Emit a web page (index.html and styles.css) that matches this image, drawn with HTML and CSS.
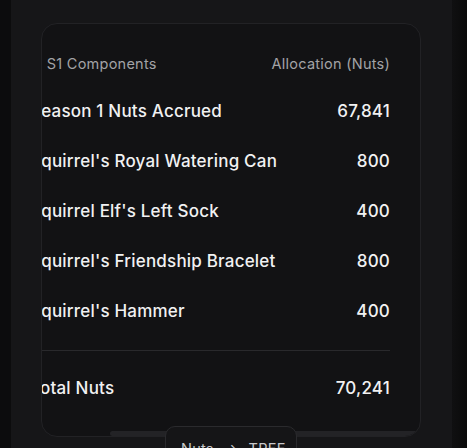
FILE: index.html
```html
<!DOCTYPE html>
<html lang="en">
<head>
<meta charset="utf-8">
<title>S1 Components</title>
<link rel="stylesheet" href="styles.css">
</head>
<body>
<div class="page">
  <div class="edge-left"></div>
  <main class="panel">
    <section class="card">
      <div class="content">
        <div class="row head">
          <span class="head-left">· S1 Components</span>
          <span>Allocation (Nuts)</span>
        </div>
        <div class="row"><span>Season 1 Nuts Accrued</span><span>67,841</span></div>
        <div class="row"><span>Squirrel's Royal Watering Can</span><span>800</span></div>
        <div class="row"><span>Squirrel Elf's Left Sock</span><span>400</span></div>
        <div class="row"><span>Squirrel's Friendship Bracelet</span><span>800</span></div>
        <div class="row"><span>Squirrel's Hammer</span><span>400</span></div>
        <div class="divider"></div>
        <div class="row total"><span>Total Nuts</span><span>70,241</span></div>
      </div>
      <div class="scroll-thumb"></div>
    </section>
    <div class="tip">Nuts <span class="arrow">→</span> TREE</div>
  </main>
  <div class="edge-right"></div>
</div>
</body>
</html>
```
FILE: styles.css
```css
html, body {
  margin: 0;
  padding: 0;
  height: 448px;
  overflow: hidden;
  background: #0b0b0c;
  font-family: "Inter", "Liberation Sans", sans-serif;
}

.page {
  display: flex;
  height: 448px;
}

.edge-left {
  width: 11px;
  flex: none;
  background: #0c0c0d;
}

.panel {
  position: relative;
  width: 441px;
  flex: none;
  background: #161618;
  padding-top: 23px;
  box-sizing: border-box;
}

.edge-right {
  flex: 1;
  background: linear-gradient(to right, #101011, #0a0a0a);
}

.card {
  position: relative;
  margin-left: 30px;
  width: 380px;
  height: 414px;
  box-sizing: border-box;
  border: 1px solid #222225;
  border-radius: 16px;
  background: #121214;
  overflow: hidden;
}

.content {
  margin-left: -12px;
  width: 360px;
  padding-top: 16px;
}

.row {
  display: flex;
  justify-content: space-between;
  align-items: center;
  height: 50px;
  font-size: 17px;
  font-weight: 500;
  letter-spacing: 0.2px;
  color: #f1f1f2;
  white-space: nowrap;
}

.row.head {
  height: 46px;
  font-size: 14.5px;
  font-weight: 400;
  letter-spacing: 0.25px;
  color: #a3a3a6;
}

.head-left {
  padding-left: 8px;
}

.divider {
  height: 1px;
  background: #29292c;
  margin: 14px 0 12px 0;
}

.scroll-thumb {
  position: absolute;
  left: 68px;
  right: 2px;
  bottom: 0;
  height: 5px;
  border-radius: 3px;
  background: #232326;
}

.tip {
  position: absolute;
  left: 154px;
  top: 426px;
  width: 132px;
  height: 44px;
  box-sizing: border-box;
  border: 1px solid #2a2a2d;
  border-radius: 10px;
  background: #151517;
  padding: 13px 0 0 15px;
  font-size: 14.5px;
  letter-spacing: 0.25px;
  color: #c8c8cb;
  white-space: nowrap;
}

.arrow {
  margin: 0 6px;
}
```
